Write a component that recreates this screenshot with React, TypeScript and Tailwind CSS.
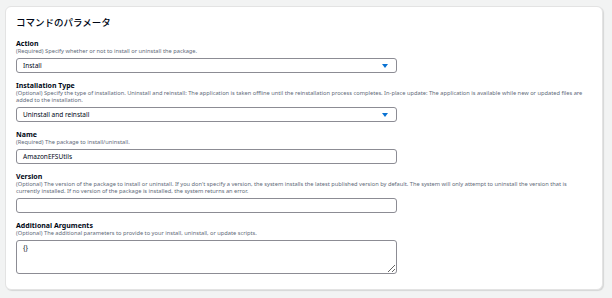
import React from "react";

function Arrow() {
  return (
    <svg width="6" height="4" viewBox="0 0 6 4" className="shrink-0">
      <path d="M0 0 H6 L3 4 Z" fill="#0972d3" />
    </svg>
  );
}

function Field({
  label,
  desc,
  children,
}: {
  label: string;
  desc: string;
  children: React.ReactNode;
}) {
  return (
    <div className="flex flex-col">
      <div className="text-[7px] leading-[9px] font-bold text-[#000716]">{label}</div>
      <div className="w-[571px] text-[5.7px] leading-[7px] text-[#5f6b7a]">{desc}</div>
      <div className="mt-[3px]">{children}</div>
    </div>
  );
}

function Select({ value }: { value: string }) {
  return (
    <div className="w-[381px] h-[15px] border border-[#8c8c94] rounded-[3px] flex items-center justify-between pl-[6px] pr-[8px] text-[6.5px] text-[#000716]">
      <span>{value}</span>
      <Arrow />
    </div>
  );
}

function Input({ value }: { value: string }) {
  return (
    <div className="w-[381px] h-[15px] border border-[#8c8c94] rounded-[3px] flex items-center pl-[6px] text-[6.5px] text-[#000716]">
      <span>{value}</span>
    </div>
  );
}

export default function App() {
  return (
    <div
      className="w-[612px] h-[298px] bg-[#f2f3f3] pt-[6px] pl-[5px] pr-[9px]"
      style={{ fontFamily: '"Noto Sans", "Noto Sans CJK JP", sans-serif' }}
    >
      <div className="h-[284px] bg-white rounded-[6px] border border-[#e3e3e3] shadow-[1px_1px_1px_rgba(0,0,0,0.12)] pl-[10px] pt-[8px]">
        <div
          className="text-[9.5px] leading-[14px] font-medium text-[#000716]"
          style={{ fontFamily: '"Noto Sans CJK JP", sans-serif' }}
        >
          コマンドのパラメータ
        </div>
        <div className="mt-[10px] flex flex-col gap-[8px]">
          <Field
            label="Action"
            desc="(Required) Specify whether or not to install or uninstall the package."
          >
            <Select value="Install" />
          </Field>
          <Field
            label="Installation Type"
            desc="(Optional) Specify the type of installation. Uninstall and reinstall: The application is taken offline until the reinstallation process completes. In-place update: The application is available while new or updated files are added to the installation."
          >
            <Select value="Uninstall and reinstall" />
          </Field>
          <Field label="Name" desc="(Required) The package to install/uninstall.">
            <Input value="AmazonEFSUtils" />
          </Field>
          <Field
            label="Version"
            desc="(Optional) The version of the package to install or uninstall. If you don't specify a version, the system installs the latest published version by default. The system will only attempt to uninstall the version that is currently installed. If no version of the package is installed, the system returns an error."
          >
            <Input value="" />
          </Field>
          <Field
            label="Additional Arguments"
            desc="(Optional) The additional parameters to provide to your install, uninstall, or update scripts."
          >
            <textarea
              readOnly
              value="{}"
              className="block w-[381px] h-[34px] border border-[#8c8c94] rounded-[3px] pl-[6px] pt-[2px] text-[6.5px] leading-[9px] text-[#000716] outline-none"
              style={{ fontFamily: '"Noto Sans", sans-serif' }}
            />
          </Field>
        </div>
      </div>
    </div>
  );
}
